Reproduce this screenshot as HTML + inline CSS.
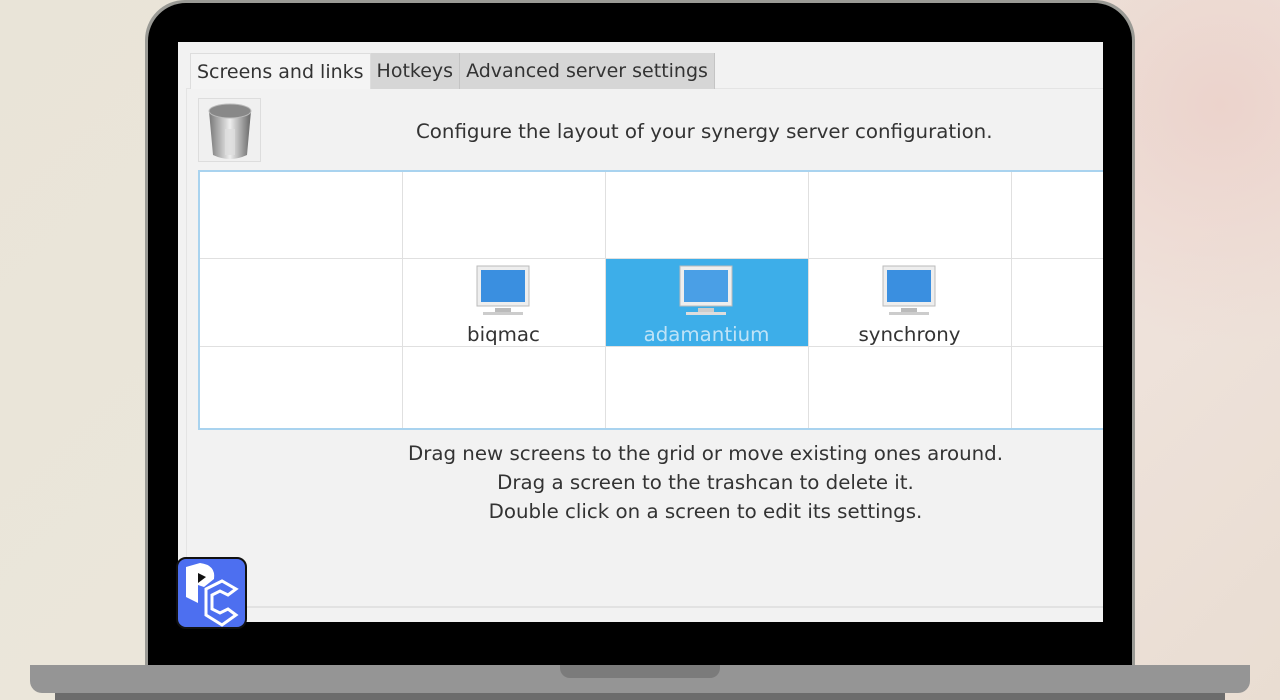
<!DOCTYPE html>
<html><head><style>
*{margin:0;padding:0;box-sizing:border-box}
body{width:1280px;height:700px;overflow:hidden;background:linear-gradient(135deg,#e9e4d8 0%,#ebe6da 40%,#efe3dc 70%,#e9ddd2 100%);font-family:"DejaVu Sans","Liberation Sans",sans-serif;position:relative}
.pink{position:absolute;right:0;top:0;width:300px;height:350px;background:radial-gradient(circle at 80% 30%,#ecd3cc,transparent 70%)}
.lid{position:absolute;left:145px;top:0;width:990px;height:700px;background:#9a9a95;border-radius:40px 40px 0 0}
.blk{position:absolute;left:148px;top:3px;width:984px;height:670px;background:#000;border-radius:38px 38px 0 0}
.scr{position:absolute;left:178px;top:42px;width:925px;height:580px;background:#f2f2f2;overflow:hidden}
.tabs{position:absolute;left:12px;top:11px;height:36px;display:flex;font-size:19px;color:#333}
.tab{padding:7px 6px 6px;background:#d6d6d6;border-right:1px solid #c4c4c4}
.tab.a{background:#f4f4f4;border:1px solid #ddd;border-bottom:none}
.pane{position:absolute;left:8px;top:46px;width:930px;height:520px;border:1px solid #e4e4e4;border-bottom:2px solid #e2e2e2}
.trash{position:absolute;left:20px;top:56px;width:63px;height:64px;border:1px solid #ddd;background:#f0f0f0}
.cfg{position:absolute;left:238px;top:78px;font-size:19.8px;color:#333}
.grid{position:absolute;left:20px;top:128px;width:920px;height:260px;border:2px solid #a9d3ef;background:#fff}
.v{position:absolute;top:0;bottom:0;width:1px;background:#e0e0e0}
.h{position:absolute;left:0;right:0;height:1px;background:#e0e0e0}
.sel{position:absolute;left:405px;top:86px;width:203px;height:88px;background:#3daee9}
.lbl{position:absolute;width:203px;text-align:center;font-size:19.8px;color:#333}
.help{position:absolute;left:0;width:1055px;text-align:center;font-size:19.8px;color:#333;line-height:29px;top:397px}
.base{position:absolute;left:30px;top:665px;width:1220px;height:28px;background:#959595;border-radius:0 0 12px 12px}
.notch{position:absolute;left:560px;top:665px;width:160px;height:13px;background:#7b7b7b;border-radius:0 0 10px 10px}
.foot{position:absolute;left:55px;top:693px;width:1170px;height:7px;background:#6c6c6c}
.logo{position:absolute;left:176px;top:557px;width:71px;height:72px;background:#4d6ff0;border:2px solid #111;border-radius:10px}
</style></head><body>
<div class="pink"></div>
<div class="lid"></div><div class="blk"></div>
<div class="scr">
 <div class="pane"></div>
 <div class="tabs"><div class="tab a">Screens and links</div><div class="tab">Hotkeys</div><div class="tab">Advanced server settings</div></div>
 <div class="trash"><svg width="63" height="64"><defs><linearGradient id="t" x1="0" x2="1"><stop offset="0" stop-color="#777"/><stop offset=".5" stop-color="#eee"/><stop offset="1" stop-color="#666"/></linearGradient></defs><path d="M10 12 L14 56 Q31 64 48 56 L52 12Z" fill="url(#t)"/><ellipse cx="31" cy="12" rx="21" ry="7" fill="#888" stroke="#bbb"/><rect x="26" y="30" width="10" height="26" fill="#ddd" opacity=".8"/></svg></div>
 <div class="cfg">Configure the layout of your synergy server configuration.</div>
 <div class="grid">
  <div class="sel"></div>
  <div class="v" style="left:202px"></div><div class="v" style="left:405px"></div><div class="v" style="left:608px"></div><div class="v" style="left:811px"></div>
  <div class="h" style="top:86px"></div><div class="h" style="top:174px"></div>
  <svg style="position:absolute;left:275px;top:92px" width="56" height="54"><rect x="2" y="2" width="52" height="40" fill="#eee" stroke="#bbb"/><rect x="6" y="6" width="44" height="32" fill="#3a8fe0"/><rect x="20" y="44" width="16" height="4" fill="#bbb"/><rect x="8" y="48" width="40" height="3" fill="#ccc"/></svg>
  <svg style="position:absolute;left:478px;top:92px" width="56" height="54"><rect x="2" y="2" width="52" height="40" fill="#eee" stroke="#bbb"/><rect x="6" y="6" width="44" height="32" fill="#4a9fe6"/><rect x="20" y="44" width="16" height="4" fill="#ccc"/><rect x="8" y="48" width="40" height="3" fill="#ddd"/></svg>
  <svg style="position:absolute;left:681px;top:92px" width="56" height="54"><rect x="2" y="2" width="52" height="40" fill="#eee" stroke="#bbb"/><rect x="6" y="6" width="44" height="32" fill="#3a8fe0"/><rect x="20" y="44" width="16" height="4" fill="#bbb"/><rect x="8" y="48" width="40" height="3" fill="#ccc"/></svg>
  <div class="lbl" style="left:202px;top:151px">biqmac</div>
  <div class="lbl" style="left:405px;top:151px;color:#bfe3f7">adamantium</div>
  <div class="lbl" style="left:608px;top:151px">synchrony</div>
 </div>
 <div class="help">Drag new screens to the grid or move existing ones around.<br>Drag a screen to the trashcan to delete it.<br>Double click on a screen to edit its settings.</div>
</div>
<div class="base"></div><div class="notch"></div><div class="foot"></div>
<div class="logo"><svg width="67" height="68"><path d="M8 8 L22 4 Q38 6 36 20 L26 28 L20 26 L20 44 L8 38Z" fill="#fff"/><path d="M20 14 L28 18 L20 24Z" fill="#111"/><path d="M28 30 L44 22 L58 30 L50 36 L42 32 L34 36 L34 50 L42 54 L50 50 L58 56 L44 66 L28 56Z" fill="none" stroke="#fff" stroke-width="3"/></svg></div>
</body></html>
